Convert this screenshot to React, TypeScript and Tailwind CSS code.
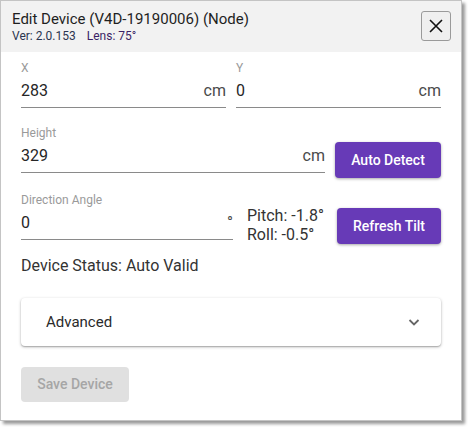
import React from "react";

interface FieldProps {
  label: string;
  value: string;
  unit?: string;
  className?: string;
}

// 下划线输入框
const Field: React.FC<FieldProps> = ({ label, value, unit, className }) => (
  <div className={`flex flex-col ${className ?? ""}`}>
    <div className="h-[16px] text-[12px] leading-[16px] text-[#9a9a9a]">{label}</div>
    <div className="flex h-[32px] items-center justify-between border-b border-[#8a8a8a] pb-[1px]">
      <span className="text-[16px] text-[#262626]">{value}</span>
      {unit && <span className="text-[16px] text-[#4a4a4a]">{unit}</span>}
    </div>
  </div>
);

const App: React.FC = () => {
  return (
    <div className="h-[427px] w-[468px] bg-white" style={{ fontFamily: "Roboto, 'Liberation Sans', sans-serif" }}>
      <div className="flex h-[421px] w-[462px] flex-col border border-[#c4c4c4] bg-white shadow-[3px_3px_3px_rgba(0,0,0,0.4)]">
        {/* header */}
        <div className="flex h-[51px] shrink-0 items-start justify-between bg-[#f2f2f2] pl-[11px] pr-[10px]">
          <div className="flex flex-col pt-[8px]">
            <div className="text-[15px] leading-[20px] text-[#1f1f1f]">Edit Device (V4D-19190006) (Node)</div>
            <div className="flex gap-[11px] text-[12px] leading-[14px]">
              <span className="text-[#2b3550]">Ver: 2.0.153</span>
              <span className="text-[#3b1f66]">Lens: 75°</span>
            </div>
          </div>
          <button className="mt-[10px] flex h-[30px] w-[30px] items-center justify-center rounded-[3px] border border-[#9a9a9a] bg-[#efefef]">
            <svg width="16" height="16" viewBox="0 0 16 16" fill="none" stroke="#111" strokeWidth="1.6">
              <path d="M2 2L14 14M14 2L2 14" />
            </svg>
          </button>
        </div>

        {/* body */}
        <div className="flex flex-col px-[20px] pt-[8px]">
          <div className="flex gap-[10px]">
            <Field label="X" value="283" unit="cm" className="w-[205px]" />
            <Field label="Y" value="0" unit="cm" className="w-[205px]" />
          </div>

          <div className="mt-[17px] flex items-start gap-[10px]">
            <Field label="Height" value="329" unit="cm" className="w-[304px]" />
            <button className="mt-[17px] h-[36px] w-[106px] rounded-[4px] bg-[#673ab7] text-[14px] font-medium text-white shadow-[0_1px_3px_rgba(0,0,0,0.35)]">
              Auto Detect
            </button>
          </div>

          <div className="mt-[14px] flex items-start">
            <Field label="Direction Angle" value="0" unit="°" className="w-[212px]" />
            <div className="ml-[14px] mt-[14px] flex flex-col text-[16px] leading-[19px] text-[#333]">
              <span>Pitch: -1.8°</span>
              <span>Roll: -0.5°</span>
            </div>
            <button className="ml-auto mt-[16px] h-[36px] w-[104px] rounded-[4px] bg-[#673ab7] text-[14px] font-medium text-white shadow-[0_1px_3px_rgba(0,0,0,0.35)]">
              Refresh Tilt
            </button>
          </div>

          <div className="mt-[12px] text-[16px] leading-[20px] text-[#333]">Device Status: Auto Valid</div>

          <div className="mt-[22px] flex h-[48px] items-center justify-between rounded-[4px] bg-white pl-[25px] pr-[20px] shadow-[0_1px_3px_rgba(0,0,0,0.3),0_1px_1px_rgba(0,0,0,0.14)]">
            <span className="text-[15px] text-[#2a2a2a]">Advanced</span>
            <svg width="14" height="14" viewBox="0 0 14 14" fill="none" stroke="#666" strokeWidth="1.8">
              <path d="M2.5 5L7 9.5L11.5 5" />
            </svg>
          </div>

          <button className="mt-[21px] h-[35px] w-[108px] rounded-[4px] bg-[#e0e0e0] text-[14px] font-medium text-[#a6a6a6]">
            Save Device
          </button>
        </div>
      </div>
    </div>
  );
};

export default App;
